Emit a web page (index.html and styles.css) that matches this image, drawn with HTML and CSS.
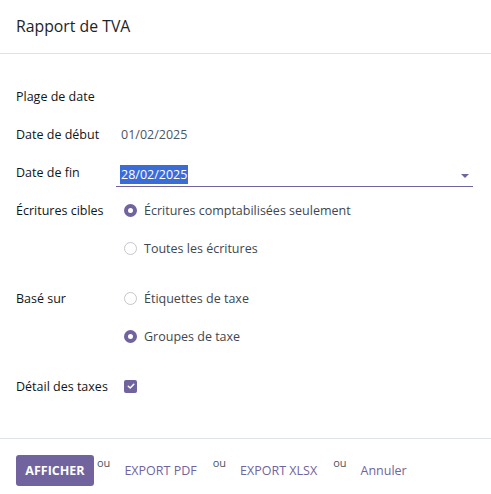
FILE: index.html
```html
<!DOCTYPE html>
<html lang="fr">
<head>
<meta charset="utf-8">
<title>Rapport de TVA</title>
<link rel="stylesheet" href="styles.css">
</head>
<body>
<div class="dialog">
  <header class="head">
    <h4 class="title">Rapport de TVA</h4>
  </header>
  <main class="body">
    <div class="row">
      <div class="label">Plage de date</div>
    </div>
    <div class="row">
      <div class="label">Date de début</div>
      <div class="value text">01/02/2025</div>
    </div>
    <div class="row">
      <div class="label">Date de fin</div>
      <div class="value input">
        <span class="sel">28/02/2025</span>
        <span class="caret"></span>
      </div>
    </div>
    <div class="row">
      <div class="label">Écritures cibles</div>
      <div class="value radio"><span class="dot on"></span>Écritures comptabilisées seulement</div>
    </div>
    <div class="row">
      <div class="label"></div>
      <div class="value radio"><span class="dot"></span>Toutes les écritures</div>
    </div>
    <div class="row gap">
      <div class="label">Basé sur</div>
      <div class="value radio"><span class="dot"></span>Étiquettes de taxe</div>
    </div>
    <div class="row">
      <div class="label"></div>
      <div class="value radio"><span class="dot on"></span>Groupes de taxe</div>
    </div>
    <div class="row gap">
      <div class="label">Détail des taxes</div>
      <div class="value radio">
        <span class="check"><svg width="8" height="8" viewBox="0 0 8 8"><path d="M1.3 4.2 L3.2 6 L6.8 2.2" fill="none" stroke="#fff" stroke-width="1.5" stroke-linecap="round" stroke-linejoin="round"/></svg></span>
      </div>
    </div>
  </main>
  <footer class="foot">
    <button class="btn primary">AFFICHER</button>
    <sup class="ou">ou</sup>
    <button class="btn link">EXPORT PDF</button>
    <sup class="ou">ou</sup>
    <button class="btn link">EXPORT XLSX</button>
    <sup class="ou">ou</sup>
    <button class="btn link">Annuler</button>
  </footer>
</div>
</body>
</html>
```
FILE: styles.css
```css
* { box-sizing: border-box; }
html, body { margin: 0; padding: 0; background: #fff; }
body {
  font-family: "Open Sans", "Noto Sans", Arial, sans-serif;
  font-size: 12.5px;
  color: #3f4650;
}
.dialog { width: 491px; height: 494px; display: flex; flex-direction: column; }
.head {
  height: 54px;
  border-bottom: 1px solid #dee2e6;
  display: flex;
  align-items: center;
  padding: 0 16px;
}
.title {
  margin: 0;
  font-size: 15.8px;
  font-weight: 400;
  color: #1f2328;
  padding-bottom: 1px;
}
.body { padding: 23px 18px 0 16px; flex: 1; }
.row { display: flex; align-items: center; height: 38px; }
.row.gap { margin-top: 12px; }
.label {
  width: 100px;
  flex: none;
  font-weight: 500;
  color: #111418;
}
.value { flex: 1; }
.text { padding-left: 5px; color: #4b5563; }
.input {
  height: 24px;
  margin-top: 5px;
  border-bottom: 1px solid #71639e;
  display: flex;
  align-items: center;
  justify-content: space-between;
  padding: 0 4px 0 4px;
  color: #1f2328;
}
.sel { background: #3a6cd8; color: #fff; padding: 0 1px; line-height: 19px; }
.caret {
  width: 0; height: 0;
  border-left: 4px solid transparent;
  border-right: 4px solid transparent;
  border-top: 4px solid #71639e;
  margin-top: 4px;
}
.radio { display: flex; align-items: center; padding-left: 8px; color: #3f4650; }
.dot {
  width: 13px; height: 13px;
  border-radius: 50%;
  border: 1px solid #c4c7cc;
  margin-right: 7px;
  flex: none;
}
.dot.on { border: 4px solid #71639e; background: #fff; }
.check {
  width: 13px; height: 13px;
  border-radius: 2px;
  background: #71639e;
  display: flex;
  align-items: center;
  justify-content: center;
}
.foot {
  height: 56px;
  border-top: 1px solid #dee2e6;
  display: flex;
  align-items: center;
  padding: 0 16px;
  margin-top: auto;
}
.btn {
  font-family: inherit;
  font-size: 12.5px;
  border: 0;
  background: none;
  padding: 0;
  cursor: pointer;
}
.primary {
  background: #71639e;
  color: #fff;
  font-weight: 700;
  height: 31px;
  width: 78px;
  border-radius: 3px;
  margin-top: 7px;
}
.link { color: #71639e; font-weight: 500; margin: 8px 16px 0 12px; }
.ou { font-size: 11px; color: #4b5563; margin-left: 3px; align-self: flex-start; margin-top: 16px; }
.ou + .link { margin-left: 14px; }
.link + .ou { margin-left: 0; }
```
